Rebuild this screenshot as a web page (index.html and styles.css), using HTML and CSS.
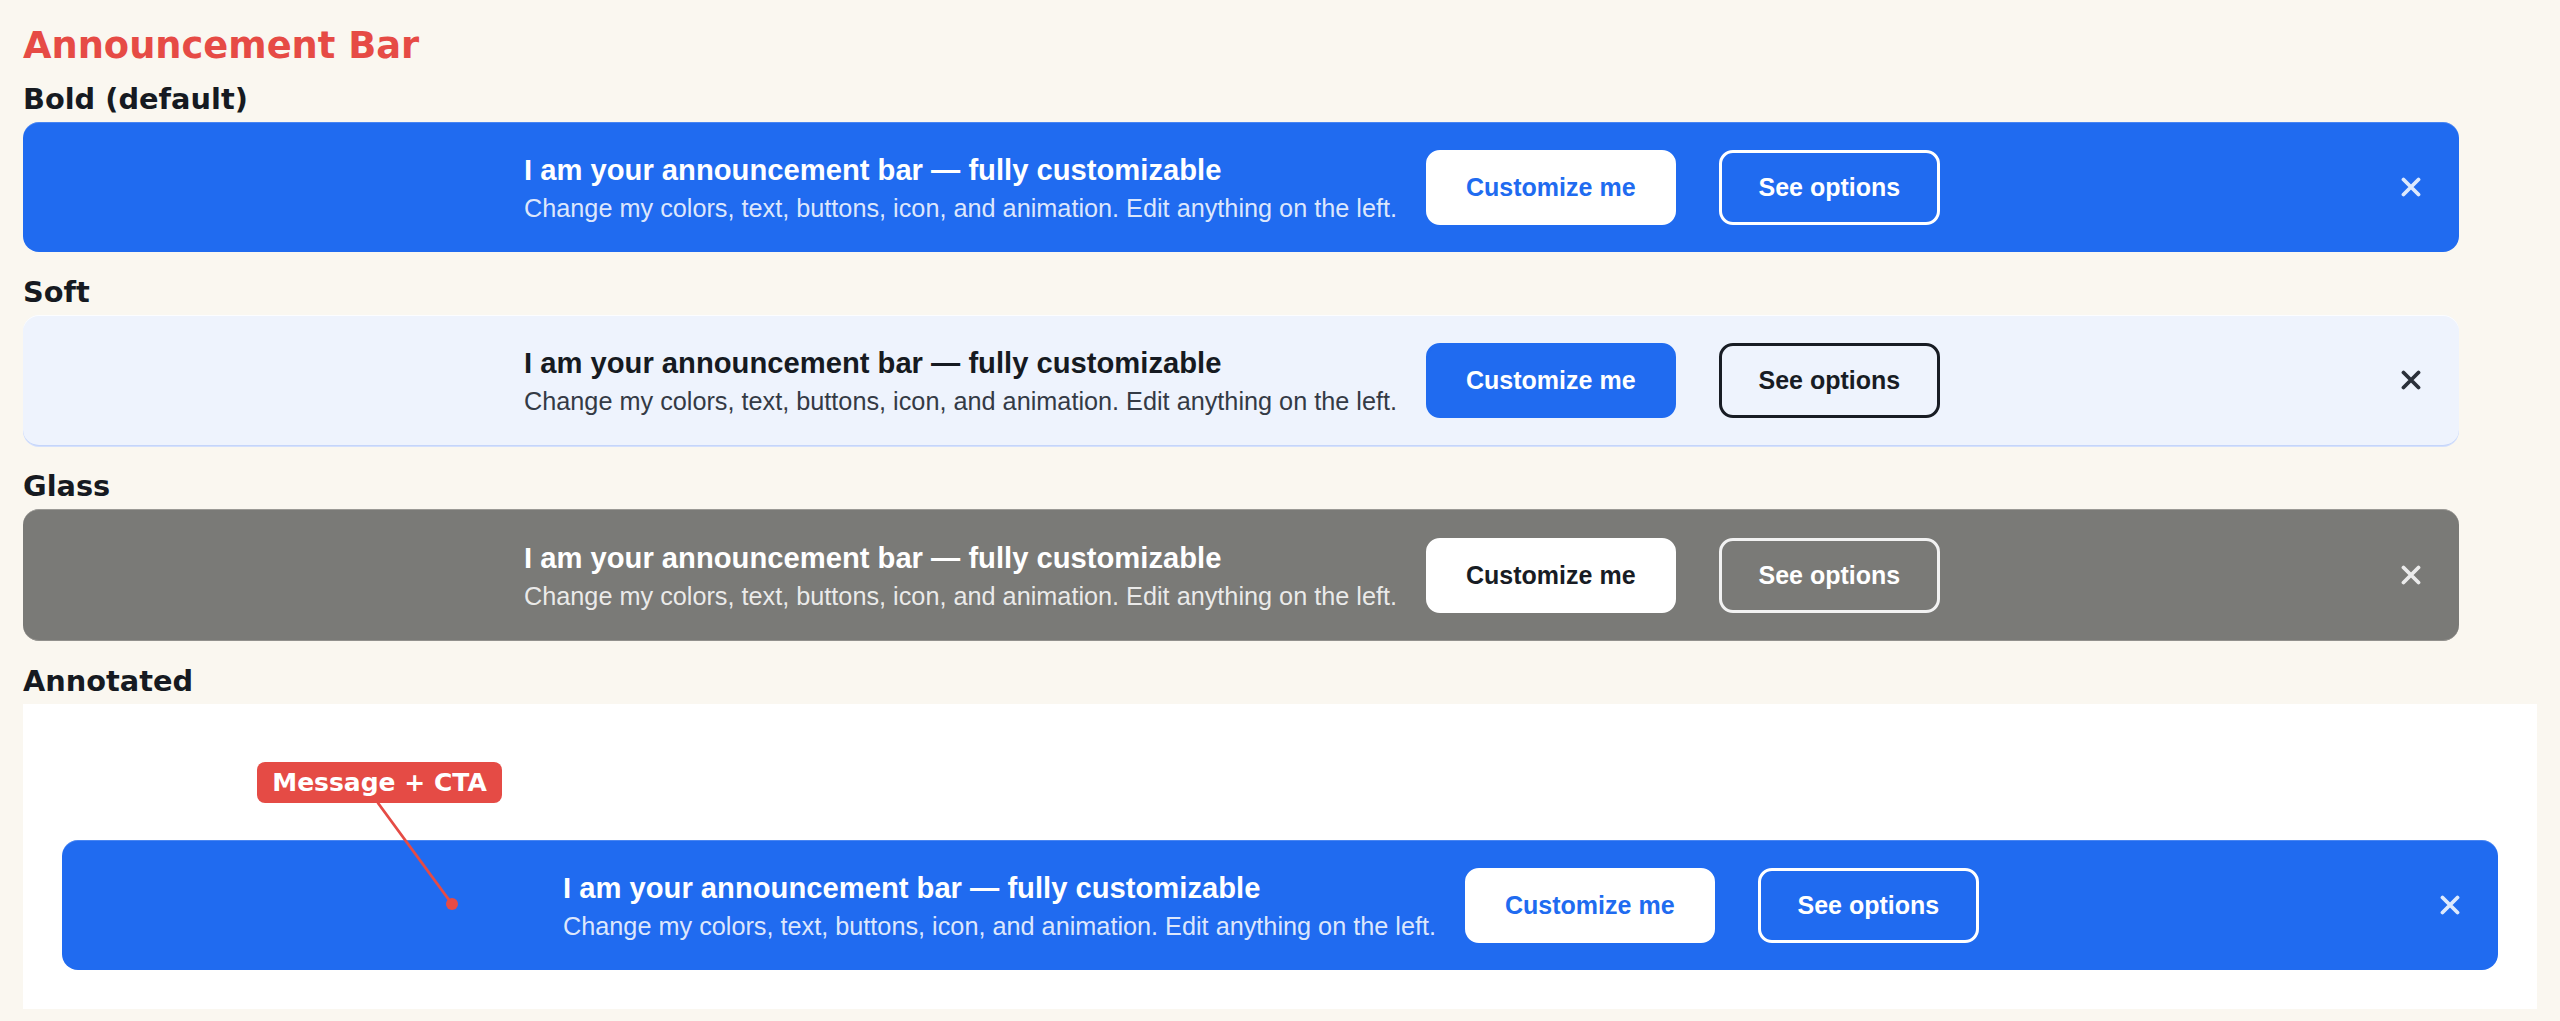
FILE: index.html
```html
<!DOCTYPE html>
<html lang="en">
<head>
<meta charset="utf-8">
<title>Announcement Bar</title>
<link rel="stylesheet" href="styles.css">
</head>
<body>
  <h1 class="page-title">Announcement Bar</h1>

  <section class="variant variant-first">
    <h2 class="variant-label">Bold (default)</h2>
    <div class="bar bar-bold">
      <div class="bar-group">
        <div class="bar-text">
          <div class="bar-title">I am your announcement bar — fully customizable</div>
          <div class="bar-sub">Change my colors, text, buttons, icon, and animation. Edit anything on the left.</div>
        </div>
        <div class="bar-actions">
          <button class="btn btn-primary">Customize me</button>
          <button class="btn btn-secondary">See options</button>
        </div>
      </div>
      <button class="bar-close" aria-label="Close">
        <svg viewBox="0 0 20 20" width="20" height="20"><path d="M2.5 2.5 L17.5 17.5 M17.5 2.5 L2.5 17.5"/></svg>
      </button>
    </div>
  </section>

  <section class="variant">
    <h2 class="variant-label">Soft</h2>
    <div class="bar bar-soft">
      <div class="bar-group">
        <div class="bar-text">
          <div class="bar-title">I am your announcement bar — fully customizable</div>
          <div class="bar-sub">Change my colors, text, buttons, icon, and animation. Edit anything on the left.</div>
        </div>
        <div class="bar-actions">
          <button class="btn btn-primary">Customize me</button>
          <button class="btn btn-secondary">See options</button>
        </div>
      </div>
      <button class="bar-close" aria-label="Close">
        <svg viewBox="0 0 20 20" width="20" height="20"><path d="M2.5 2.5 L17.5 17.5 M17.5 2.5 L2.5 17.5"/></svg>
      </button>
    </div>
  </section>

  <section class="variant">
    <h2 class="variant-label">Glass</h2>
    <div class="bar bar-glass">
      <div class="bar-group">
        <div class="bar-text">
          <div class="bar-title">I am your announcement bar — fully customizable</div>
          <div class="bar-sub">Change my colors, text, buttons, icon, and animation. Edit anything on the left.</div>
        </div>
        <div class="bar-actions">
          <button class="btn btn-primary">Customize me</button>
          <button class="btn btn-secondary">See options</button>
        </div>
      </div>
      <button class="bar-close" aria-label="Close">
        <svg viewBox="0 0 20 20" width="20" height="20"><path d="M2.5 2.5 L17.5 17.5 M17.5 2.5 L2.5 17.5"/></svg>
      </button>
    </div>
  </section>

  <section class="variant">
    <h2 class="variant-label">Annotated</h2>
    <div class="annot-panel">
      <div class="bar bar-bold">
        <div class="bar-group">
          <div class="bar-text">
            <div class="bar-title">I am your announcement bar — fully customizable</div>
            <div class="bar-sub">Change my colors, text, buttons, icon, and animation. Edit anything on the left.</div>
          </div>
          <div class="bar-actions">
            <button class="btn btn-primary">Customize me</button>
            <button class="btn btn-secondary">See options</button>
          </div>
        </div>
        <button class="bar-close" aria-label="Close">
          <svg viewBox="0 0 20 20" width="20" height="20"><path d="M2.5 2.5 L17.5 17.5 M17.5 2.5 L2.5 17.5"/></svg>
        </button>
      </div>
      <svg class="annot-lines" width="600" height="260" viewBox="0 0 600 260">
        <line x1="355" y1="99" x2="429" y2="200"/>
        <circle cx="429" cy="200" r="6"/>
      </svg>
      <div class="annot-tag">Message + CTA</div>
    </div>
  </section>
</body>
</html>
```
FILE: styles.css
```css
* { box-sizing: border-box; }

html, body { margin: 0; }

body {
  background: #faf7f0;
  padding: 24px 23px 12px;
  font-family: "DejaVu Sans", sans-serif;
  color: #161a21;
}

.page-title {
  margin: 0;
  font-family: "DejaVu Sans", sans-serif;
  font-weight: 700;
  font-size: 36.8px;
  line-height: 44px;
  color: #e64b45;
}

.variant { margin-top: 23px; }
.variant-first { margin-top: 14px; }

.variant-label {
  margin: 0 0 5px;
  font-family: "DejaVu Sans", sans-serif;
  font-weight: 700;
  font-size: 28.8px;
  line-height: 35px;
  color: #161a21;
}

.bar {
  width: 100%;
  max-width: 2436px;
  height: 130px;
  border-radius: 16px;
  display: flex;
  align-items: center;
  padding: 0 38px 0 501px;
  font-family: "Liberation Sans", Arial, sans-serif;
}

.bar-group {
  display: flex;
  align-items: center;
  gap: 29px;
}

.bar-text {
  display: flex;
  flex-direction: column;
  padding-top: 3px;
}

.bar-title {
  font-weight: 700;
  font-size: 29.2px;
  line-height: 38px;
}

.bar-sub {
  font-size: 25.25px;
  line-height: 38px;
}

.bar-actions {
  display: flex;
  align-items: center;
  gap: 43px;
}

.btn {
  font-family: "Liberation Sans", Arial, sans-serif;
  font-weight: 700;
  font-size: 25px;
  line-height: 29px;
  padding: 20px 37px;
  border: 3.5px solid transparent;
  border-radius: 14px;
  background: transparent;
  cursor: pointer;
}

.bar-close {
  margin-left: auto;
  width: 20px;
  height: 20px;
  padding: 0;
  border: 0;
  background: none;
  display: flex;
}
.bar-close svg path {
  fill: none;
  stroke-width: 3.8;
  stroke-linecap: round;
}

/* Bold */
.bar-bold {
  background: #206bf0;
  box-shadow: inset 0 1px 0 rgba(255,255,255,0.18);
  color: #ffffff;
}
.bar-bold .bar-sub { color: rgba(255,255,255,0.86); }
.bar-bold .btn-primary { background: #ffffff; border-color: #ffffff; color: #206bf0; }
.bar-bold .btn-secondary { border-color: #ffffff; color: #ffffff; }
.bar-bold .bar-close svg path { stroke: rgba(255,255,255,0.85); }

/* Soft */
.bar-soft {
  height: 131px;
  background: #eef3fd;
  border-bottom: 1px solid #c5d5fa;
  box-shadow: 0 1px 0 #d4e0fc, inset 0 1px 0 rgba(255,255,255,0.8);
  color: #161a21;
}
.bar-soft .bar-sub { color: #343a45; }
.bar-soft .btn-primary { background: #206bf0; border-color: #206bf0; color: #ffffff; }
.bar-soft .btn-secondary { border-color: #181c24; color: #181c24; }
.bar-soft .bar-close svg path { stroke: #2b303a; }

/* Glass */
.bar-glass {
  height: 132px;
  background: #7a7a77;
  border-top: 1px solid #9b9a96;
  border-bottom: 1px solid #92918d;
  color: #ffffff;
}
.bar-glass .bar-sub { color: rgba(255,255,255,0.86); }
.bar-glass .btn-primary { background: #ffffff; border-color: #ffffff; color: #181c24; }
.bar-glass .btn-secondary { border-color: rgba(255,255,255,0.9); color: #ffffff; }
.bar-glass .bar-close svg path { stroke: rgba(255,255,255,0.85); }

/* Annotated */
.annot-panel {
  position: relative;
  background: #ffffff;
  padding: 136px 39px 39px;
}

.annot-lines {
  position: absolute;
  left: 0;
  top: 0;
  pointer-events: none;
}
.annot-lines line { stroke: #e54b45; stroke-width: 2.8; stroke-linecap: round; }
.annot-lines circle { fill: #e54b45; }

.annot-tag {
  position: absolute;
  left: 234px;
  top: 58px;
  width: 245px;
  height: 41px;
  border-radius: 8px;
  background: #e54b45;
  color: #ffffff;
  font-family: "DejaVu Sans", sans-serif;
  font-weight: 700;
  font-size: 25px;
  line-height: 41px;
  text-align: center;
}
```
